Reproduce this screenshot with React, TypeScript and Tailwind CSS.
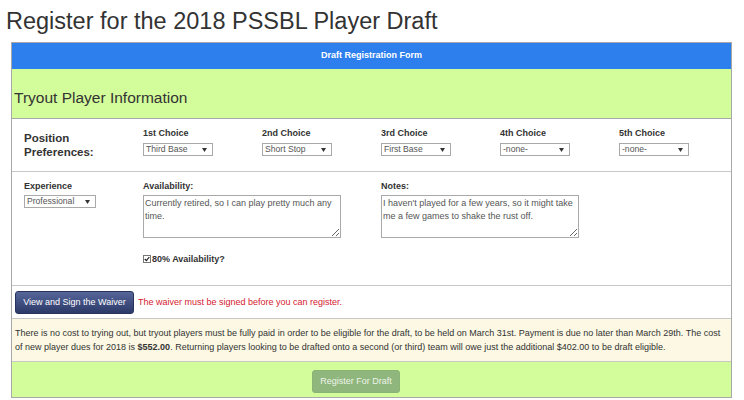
import type { ReactNode } from "react";

const font = "font-['Liberation_Sans',Arial,sans-serif]";

type FakeSelectProps = {
  value: string;
  width: string;
};

function FakeSelect({ value, width }: FakeSelectProps) {
  return (
    <div
      className={`relative flex h-[13px] items-center border border-[#a9a9a9] bg-white pl-[2px] text-[8.6px] leading-none text-[#555] ${width}`}
    >
      <span>{value}</span>
      <svg className="absolute right-[5px] top-[4px]" width="5" height="4" viewBox="0 0 5 4">
        <path d="M0 0 L5 0 L2.5 4 Z" fill="#333" />
      </svg>
    </div>
  );
}

function Label({ children }: { children: ReactNode }) {
  return <div className="text-[9px] font-bold leading-[12px] text-[#333]">{children}</div>;
}

const choices = [
  { label: "1st Choice", value: "Third Base", width: "w-[70px]" },
  { label: "2nd Choice", value: "Short Stop", width: "w-[70px]" },
  { label: "3rd Choice", value: "First Base", width: "w-[70px]" },
  { label: "4th Choice", value: "-none-", width: "w-[70px]" },
  { label: "5th Choice", value: "-none-", width: "w-[70px]" },
];

export default function App() {
  return (
    <div className={`h-[400px] w-[744px] bg-white text-[#333] ${font}`}>
      <h1 className="h-[42px] pl-[6px] pt-[8px] text-[23.5px] font-normal leading-[27px] text-[#333]">
        Register for the 2018 PSSBL Player Draft
      </h1>

      <div className="ml-[11px] w-[721px] border border-[#a8a8a8]">
        <div className="flex h-[26px] items-center justify-center bg-[#2e7fee] text-[9px] font-bold text-white">
          Draft Registration Form
        </div>

        <div className="h-[50px] border-b border-[#a8a8a8] bg-[#d3fc9b] pl-[2px] pt-[20px] text-[15.5px] leading-[18px] text-[#333]">
          Tryout Player Information
        </div>

        {/* position preferences */}
        <div className="grid h-[53px] grid-cols-[119px_119px_119px_119px_119px_1fr] border-b border-[#c8c8c8] pl-[12px] pt-[8px]">
          <div className="pt-[4px] text-[11.5px] font-bold leading-[14px] text-[#333]">
            Position
            <br />
            Preferences:
          </div>
          {choices.map((c) => (
            <div key={c.label} className="flex flex-col gap-[4px]">
              <Label>{c.label}</Label>
              <FakeSelect value={c.value} width={c.width} />
            </div>
          ))}
        </div>

        {/* experience / availability / notes */}
        <div className="grid h-[114px] grid-cols-[119px_238px_1fr] border-b border-[#c8c8c8] pl-[12px] pt-[8px]">
          <div className="flex flex-col gap-[3px]">
            <Label>Experience</Label>
            <FakeSelect value="Professional" width="w-[72px]" />
          </div>
          <div className="flex flex-col">
            <Label>Availability:</Label>
            <textarea
              readOnly
              className="mt-[3px] h-[43px] w-[198px] border border-[#a9a9a9] bg-white px-[1px] pt-[1px] text-[9px] leading-[13px] text-[#555] outline-none"
              defaultValue="Currently retired, so I can play pretty much any time."
            />
            <div className="mt-[15px] flex items-center gap-[1px]">
              <span className="flex h-[8px] w-[8px] items-center justify-center border border-[#777] bg-white">
                <svg width="6" height="6" viewBox="0 0 6 6">
                  <path d="M0.8 3 L2.4 4.7 L5.3 1" fill="none" stroke="#222" strokeWidth="1.2" />
                </svg>
              </span>
              <span className="text-[9px] font-bold leading-[12px] text-[#333]">80% Availability?</span>
            </div>
          </div>
          <div className="flex flex-col">
            <Label>Notes:</Label>
            <textarea
              readOnly
              className="mt-[3px] h-[43px] w-[198px] border border-[#a9a9a9] bg-white px-[1px] pt-[1px] text-[9px] leading-[13px] text-[#555] outline-none"
              defaultValue="I haven't played for a few years, so it might take me a few games to shake the rust off."
            />
          </div>
        </div>

        {/* waiver */}
        <div className="flex h-[33px] items-start gap-[4px] border-b border-[#c8c8c8] pl-[3px] pt-[5px]">
          <button
            type="button"
            className="h-[23px] w-[119px] rounded-[3px] border border-[#27335c] bg-gradient-to-b from-[#56669a] to-[#2c3a68] text-[9px] text-white"
          >
            View and Sign the Waiver
          </button>
          <span className="text-[9px] leading-[23px] text-[#d4202f]">
            The waiver must be signed before you can register.
          </span>
        </div>

        {/* dues */}
        <div className="h-[43px] border-b border-[#c8c8c8] bg-[#fcf8e3] pl-[3px] pt-[7px] text-[9px] leading-[14px] text-[#333]">
          There is no cost to trying out, but tryout players must be fully paid in order to be eligible for the draft, to
          be held on March 31st. Payment is due no later than March 29th. The cost
          <br />
          of new player dues for 2018 is <b>$552.00</b>. Returning players looking to be drafted onto a second (or third)
          team will owe just the additional $402.00 to be draft eligible.
        </div>

        <div className="h-[35px] bg-[#d3fc9b] pl-[300px] pt-[5px]">
          <button
            type="button"
            disabled
            className="h-[23px] w-[88px] rounded-[3px] border border-[#8ab376] bg-[#8fb67c] text-[9px] text-[#eef4ea]"
          >
            Register For Draft
          </button>
        </div>
      </div>
    </div>
  );
}
